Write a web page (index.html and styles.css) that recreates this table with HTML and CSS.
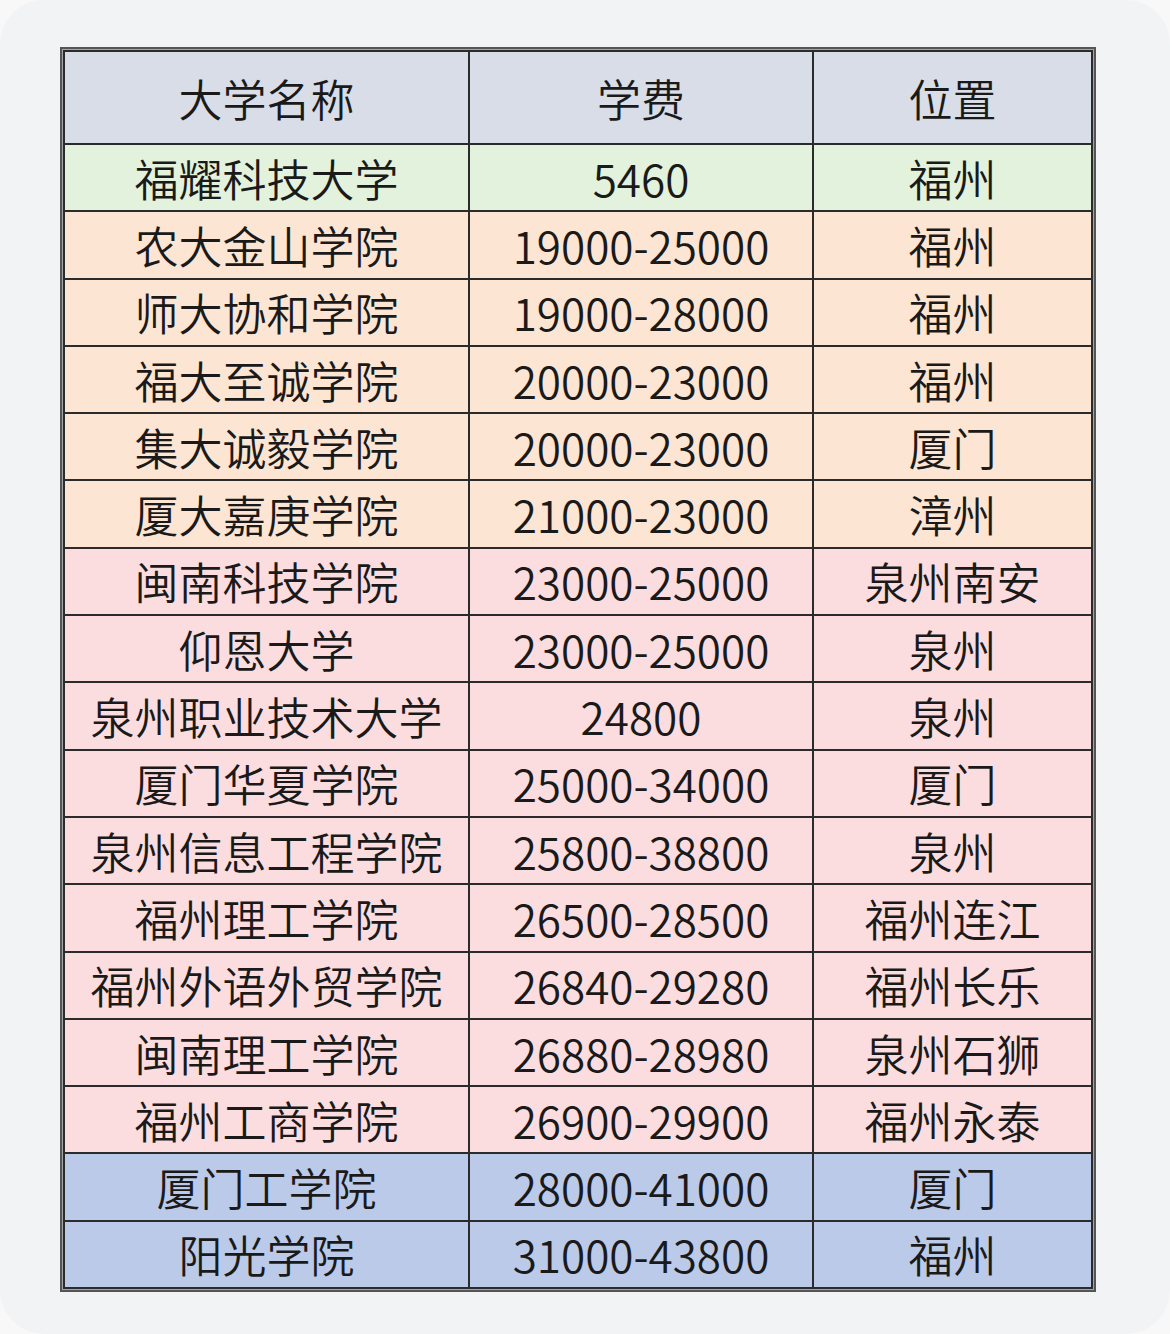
FILE: index.html
```html
<!DOCTYPE html>
<html lang="zh-CN">
<head>
<meta charset="utf-8">
<title>大学学费</title>
<link rel="stylesheet" href="styles.css">
</head>
<body>
<div class="screen">
  <div class="frame">
    <table class="fees">
      <colgroup>
        <col class="c-name">
        <col class="c-fee">
        <col class="c-loc">
      </colgroup>
      <thead>
        <tr class="head"><th>大学名称</th><th>学费</th><th>位置</th></tr>
      </thead>
      <tbody>
        <tr class="green"><td>福耀科技大学</td><td>5460</td><td>福州</td></tr>
        <tr class="orange"><td>农大金山学院</td><td>19000-25000</td><td>福州</td></tr>
        <tr class="orange"><td>师大协和学院</td><td>19000-28000</td><td>福州</td></tr>
        <tr class="orange"><td>福大至诚学院</td><td>20000-23000</td><td>福州</td></tr>
        <tr class="orange"><td>集大诚毅学院</td><td>20000-23000</td><td>厦门</td></tr>
        <tr class="orange"><td>厦大嘉庚学院</td><td>21000-23000</td><td>漳州</td></tr>
        <tr class="pink"><td>闽南科技学院</td><td>23000-25000</td><td>泉州南安</td></tr>
        <tr class="pink"><td>仰恩大学</td><td>23000-25000</td><td>泉州</td></tr>
        <tr class="pink"><td>泉州职业技术大学</td><td>24800</td><td>泉州</td></tr>
        <tr class="pink"><td>厦门华夏学院</td><td>25000-34000</td><td>厦门</td></tr>
        <tr class="pink"><td>泉州信息工程学院</td><td>25800-38800</td><td>泉州</td></tr>
        <tr class="pink"><td>福州理工学院</td><td>26500-28500</td><td>福州连江</td></tr>
        <tr class="pink"><td>福州外语外贸学院</td><td>26840-29280</td><td>福州长乐</td></tr>
        <tr class="pink"><td>闽南理工学院</td><td>26880-28980</td><td>泉州石狮</td></tr>
        <tr class="pink"><td>福州工商学院</td><td>26900-29900</td><td>福州永泰</td></tr>
        <tr class="blue"><td>厦门工学院</td><td>28000-41000</td><td>厦门</td></tr>
        <tr class="blue"><td>阳光学院</td><td>31000-43800</td><td>福州</td></tr>
      </tbody>
    </table>
  </div>
</div>
</body>
</html>
```

FILE: styles.css
```css
html, body {
  margin: 0;
  padding: 0;
  background: #f8f8f9;
}

.screen {
  width: 1170px;
  height: 1334px;
  box-sizing: border-box;
  background: #f2f3f5;
  border-radius: 44px;
  padding: 47px 0 0 60px;
}

.frame {
  display: inline-block;
  border: 2px solid #555;
  padding: 1px;
  background: #a5a5a5;
}

.fees {
  border-collapse: collapse;
  border: 2px solid #333;
  font-family: "Noto Sans CJK SC", "Noto Sans", sans-serif;
  font-size: 44px;
  color: #1a1a1a;
  table-layout: fixed;
}

.c-name { width: 405px; }
.c-fee { width: 344px; }
.c-loc { width: 279px; }

.fees th,
.fees td {
  border: 2px solid #2b2b2b;
  padding: 0;
  text-align: center;
  vertical-align: middle;
  line-height: 1;
  font-weight: 350;
}

.fees th {
  height: 91px;
}

.fees td {
  height: 65.3px;
}

.head { background: #d8dde7; }
.green { background: #e3f2dc; }
.orange { background: #fde5d3; }
.pink { background: #fbdde0; }
.blue { background: #bbcae9; }
```
